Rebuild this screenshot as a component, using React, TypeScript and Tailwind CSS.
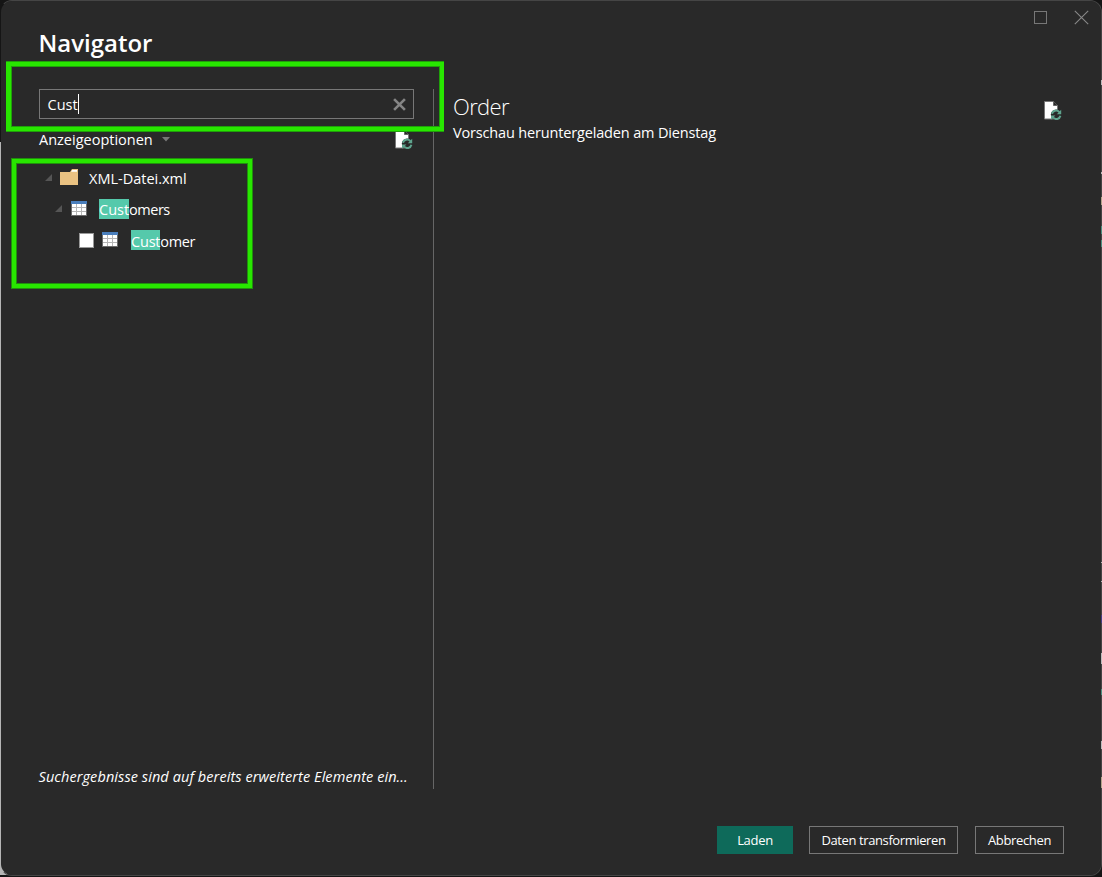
import React from "react";

function TableIcon() {
  return (
    <svg width="16" height="15" viewBox="0 0 16 15" shapeRendering="crispEdges" className="shrink-0">
      <rect width="16" height="15" fill="#6b6b6b" />
      <rect width="16" height="3" fill="#4a7ebb" />
      <rect x="1" y="3" width="14" height="11" fill="#b5b5b5" />
      {[3, 7, 11].map((y) =>
        [1, 6, 11].map((x) => <rect key={`${x}-${y}`} x={x} y={y} width="4" height="3" fill="#fff" />),
      )}
    </svg>
  );
}

function FolderIcon() {
  return (
    <svg width="18" height="16" viewBox="0 0 18 16" className="shrink-0">
      <path d="M0 3H10L12 0H18V16H0Z" fill="#eac282" />
      <path d="M11 2.7L12.3 1H17V2.7Z" fill="#fff" />
    </svg>
  );
}

function RefreshFileIcon() {
  return (
    <svg width="18" height="19" viewBox="0 0 18 19" className="shrink-0">
      <path d="M.5.5H9.5L13.5 4.5V18H.5Z" fill="#fff" stroke="#777" strokeWidth="1" />
      <path d="M9.5.5V4.5H13.5" fill="#292929" stroke="#666" />
      <circle cx="12.2" cy="13.8" r="5.4" fill="#292929" />
      <path d="M8 12.8C8.7 9.4 13 8.4 15.4 11.2M16.4 14.8C15.7 18.2 11.4 19.2 9 16.4" fill="none" stroke="#5fa48e" strokeWidth="2" />
      <path d="M17.2 8.8V13.2H12.8ZM7 18.8V14.4H11.4Z" fill="#5fa48e" />
    </svg>
  );
}

function Expander() {
  return (
    <svg width="7" height="7" viewBox="0 0 7 7" className="shrink-0">
      <path d="M7 0V7H0Z" fill="#555" />
    </svg>
  );
}

function Mark({ children }: { children: React.ReactNode }) {
  return <span className="h-5 bg-[#55c9ab] leading-[21px]">{children}</span>;
}

// Slivers of the windows behind the dialog, visible along its right edge.
function BackgroundEdge() {
  return (
    <svg className="absolute top-0 left-[1101px]" width="1" height="877" viewBox="0 0 1 877" shapeRendering="crispEdges">
      <path d="M0 80h1v5H0ZM0 172h1v2H0ZM0 562h1v1H0ZM0 581h1v1H0ZM0 653h1v11H0ZM0 741h1v8H0Z" fill="#bbb" />
      <path d="M0 197h1v8H0ZM0 777h1v11H0Z" fill="#b3a48b" />
      <path d="M0 226h1v8H0ZM0 240h1v7H0ZM0 689h1v6H0Z" fill="#4d8f80" />
      <path d="M0 615h1v8H0Z" fill="#453d85" />
    </svg>
  );
}

export default function App() {
  return (
    <div className="relative h-[877px] w-[1102px] overflow-hidden bg-[#151515] font-['Open_Sans','Noto_Sans',sans-serif] text-[14.5px] text-white">
      <div className="absolute top-[142px] left-0 h-[733px] w-2 bg-[#b5b5b5]" />
      <div className="relative flex h-[876px] w-[1102px] flex-col rounded-xl border border-l-transparent border-[#454545] bg-[#292929] bg-clip-padding">
        <header className="flex h-[88px] justify-between pl-[37.5px]">
          <h1 className="mt-[26px] h-8 whitespace-nowrap text-[24px] leading-8 font-semibold">Navigator</h1>
          <div className="mt-[9px] mr-[12px] flex h-[14px] gap-[26px]">
            <svg width="15" height="15" viewBox="0 0 15 15">
              <rect x="1.5" y="1.5" width="12" height="12" fill="none" stroke="#777" />
            </svg>
            <svg width="15" height="15" viewBox="0 0 15 15">
              <path d="M.8.8L14.2 14.2M14.2.8L.8 14.2" stroke="#888" strokeWidth="1.1" />
            </svg>
          </div>
        </header>

        <main className="flex h-[700px]">
          <section className="flex w-[432px] flex-col pl-[38px]">
            <div className="flex h-[30px] w-[375px] items-center border border-[#777] pr-[7px] pl-[7.5px]">
              <span className="pt-[2px]">Cust</span>
              <span className="h-5 w-px bg-white" />
              <svg className="ml-auto" width="13" height="13" viewBox="0 0 12 12">
                <path d="M1 1L11 11M11 1L1 11" stroke="#858585" strokeWidth="2.4" />
              </svg>
            </div>
            <div className="flex h-[41px] w-[375px] items-center">
              <span>Anzeigeoptionen</span>
              <svg className="ml-[9px]" width="8" height="5" viewBox="0 0 8 5">
                <path d="M0 0H8L4 4.5Z" fill="#777" />
              </svg>
              <span className="mr-px ml-auto">
                <RefreshFileIcon />
              </span>
            </div>
            <div className="mt-[2px] flex h-[31px] items-center pl-[6px]">
              <Expander />
              <span className="mr-[11px] mb-[2px] ml-[8px]">
                <FolderIcon />
              </span>
              <span className="pt-[3px]">XML-Datei.xml</span>
            </div>
            <div className="flex h-[31px] items-center pl-[16px]">
              <Expander />
              <span className="mr-[12px] ml-[9px]">
                <TableIcon />
              </span>
              <Mark>Cust</Mark>
              <span className="h-5 leading-[21px] tracking-[-0.5px]">omers</span>
            </div>
            <div className="flex h-[31px] items-center pl-[40px]">
              <span className="mt-px h-[15px] w-[15px] border border-[#999] bg-white" />
              <span className="mr-[13px] ml-[8px]">
                <TableIcon />
              </span>
              <span className="h-5 bg-[#55c9ab] leading-[23px] tracking-[-0.2px]">Cust</span>
              <span className="h-5 leading-[23px] tracking-[-0.4px]">omer</span>
            </div>
            <p className="mt-auto mb-[2px] ml-[-0.5px] h-5 w-[376px] whitespace-nowrap leading-5 tracking-[0.08px] italic">
              Suchergebnisse sind auf bereits erweiterte Elemente ein...
            </p>
          </section>
          <section className="flex flex-1 items-start justify-between border-l border-[#666] pl-[19px]">
            <div>
              <h2 className="mt-[2px] h-[31px] text-[22px] leading-[30px] font-light tracking-[-0.65px]">Order</h2>
              <p className="h-5 whitespace-nowrap leading-[22px] tracking-[-0.16px]">Vorschau heruntergeladen am Dienstag</p>
            </div>
            <span className="mt-[12px] mr-[39px]">
              <RefreshFileIcon />
            </span>
          </section>
        </main>

        <footer className="mt-[37px] flex h-7 justify-end gap-4 pr-[37px] text-[13px]">
          <button className="w-[76px] bg-[#0e6a5a] pt-[2px] tracking-[-0.3px]">Laden</button>
          <button className="w-[149px] border border-[#777] pt-[2px] tracking-[-0.4px] whitespace-nowrap">Daten transformieren</button>
          <button className="ml-px w-[89px] border border-[#777] pt-[2px] tracking-[-0.35px]">Abbrechen</button>
        </footer>

        <div className="absolute top-[61px] left-[5px] h-[69px] w-[438px] border-4 border-l-5 border-[#28e600] shadow-[0_1px_0_#20a00a,0_-1px_0_#20a00a,inset_0_0_0_1px_#20a00a]" />
        <div className="absolute top-[158px] left-[11px] h-[129px] w-[240px] border-4 border-[#28e600] shadow-[0_0_0_1px_#20900c,inset_0_0_0_1px_#20900c]" />
      </div>
      <BackgroundEdge />
    </div>
  );
}
